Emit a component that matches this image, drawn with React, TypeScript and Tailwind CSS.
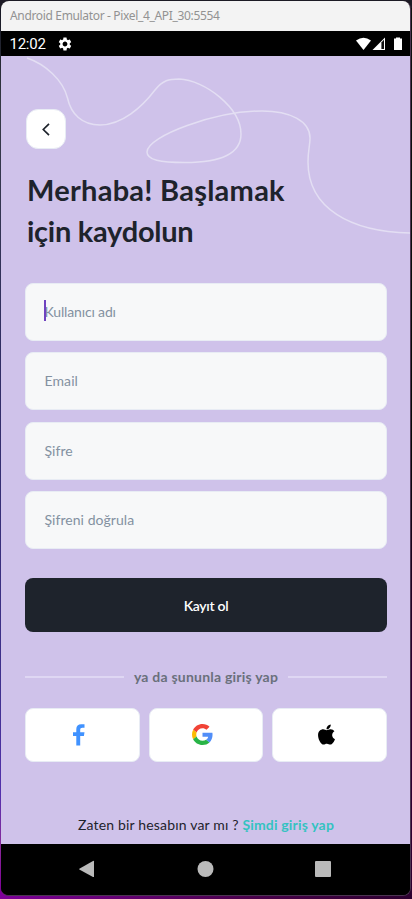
import { MdSettings } from "react-icons/md";
import { FaApple } from "react-icons/fa";

function Field({ label, tracking, focused = false }: { label: string; tracking: string; focused?: boolean }) {
  return (
    <div className="relative flex h-[58px] items-center rounded-lg border border-[#e8ecf4] bg-[#f7f8f9] pl-[18.5px]">
      {focused && <span className="absolute left-[18px] top-[16px] h-[21px] w-[2px] bg-[#6f43c0]" />}
      <span className={`whitespace-nowrap text-[14px] leading-5 text-[#8391a1] ${tracking}`}>{label}</span>
    </div>
  );
}

function FacebookIcon() {
  return (
    <svg width="12" height="22" viewBox="0 0 12 22" fill="#4092ff">
      <path d="M3.3 21.5V12H0V8.2h3.3V5.1C3.3 2 5.2.3 8.2.3h3.3v3.5H9.4C7.8 3.8 7.2 4.6 7.2 6v2.2h4.3L10.9 12H7.2v9.5z" />
    </svg>
  );
}

function GoogleIcon() {
  return (
    <svg width="21" height="21" viewBox="0 0 48 48">
      <path fill="#F14336" d="M24 9.5c3.54 0 6.71 1.22 9.21 3.6l6.85-6.85C35.9 2.38 30.47 0 24 0 14.62 0 6.51 5.38 2.56 13.22l7.98 6.19C12.43 13.72 17.74 9.5 24 9.5z" />
      <path fill="#518EF8" d="M46.98 24.55c0-1.57-.15-3.09-.38-4.55H24v9.02h12.94c-.58 2.96-2.26 5.48-4.78 7.18l7.73 6c4.51-4.18 7.09-10.36 7.09-17.65z" />
      <path fill="#FBBB00" d="M10.53 28.59c-.48-1.45-.76-2.99-.76-4.59s.27-3.14.76-4.59l-7.98-6.19C.92 16.46 0 20.12 0 24s.92 7.54 2.56 10.78z" />
      <path fill="#28B446" d="M24 48c6.48 0 11.93-2.13 15.89-5.81l-7.73-6c-2.15 1.45-4.92 2.3-8.16 2.3-6.26 0-11.57-4.22-13.47-9.91l-7.98 6.19C6.51 42.62 14.62 48 24 48z" />
    </svg>
  );
}

const socialCard = "flex h-[54px] items-center justify-center rounded-lg border border-[#e8ecf4] bg-white pr-[6px]";

export default function App() {
  return (
    <div className="h-[899px] w-[412px] pl-px pt-px font-['Lato',sans-serif] [background:linear-gradient(#1c1a24,#1c1a24)_0_0/412px_8px_no-repeat,linear-gradient(180deg,#141421_0%,#353a44_12%,#302d64_40%,#403090_78%,#5330ad_89%,#8a299a_95%,#7d0098_100%)_0_0/9px_892px_no-repeat,linear-gradient(180deg,#111111_0%,#080808_50%,#2d0030_75%,#2d0030_100%)_100%_0/9px_892px_no-repeat,linear-gradient(90deg,#7d0098,#4b004c_60%,#2d0030)]">
      <div className="flex h-[895px] w-[410px] flex-col overflow-hidden rounded-lg border-b border-r border-[#4b3550] bg-black">
        <header className="flex h-[30px] shrink-0 items-center bg-[#f3f3f3] pl-[9px] font-['Noto_Sans',sans-serif] text-[12px] text-[#929292]">
          <span className="whitespace-nowrap tracking-[-0.34px]">Android Emulator - Pixel_4_API_30:5554</span>
        </header>
        <div className="flex h-[25px] shrink-0 items-center bg-black pl-[8.5px] pr-[8px] font-['Roboto',sans-serif] text-white">
          <span className="relative top-px text-[15px] tracking-[-0.25px]">12:02</span>
          <MdSettings className="ml-[11px] size-4" />
          <svg className="ml-auto" width="46" height="14" viewBox="0 0 46 14">
            <path d="M0 3.5Q7.5-2.2 15 3.5L7.5 13Z" fill="white" />
            <path d="M16.5 13 29 .5V13Z" fill="white" />
            <path d="M25.4 5.4 28 2.8V12H25.4Z" fill="#111" />
            <path d="M38 1.5h2V.5h4v1h2V13h-8Z" fill="white" />
          </svg>
        </div>

        <main className="relative flex h-[788px] shrink-0 flex-col bg-[#cfc2ea] pl-6 pr-[23px] pt-[53px]">
          <svg className="absolute left-0 top-0" width="409" height="180" viewBox="1 56 409 180" fill="none">
            <path
              d="M27 58C45 64 63 80 67.5 98C71 114 82 125 100 125C122 125 142 107 155 90C163 80 169 79 179 79C205 80 241 108 241 134C241 155 218 162.5 185 162.5C160 162.5 147 160 147 152C147 136 216 111 262 111C290 111 310 121 310 138C310 146 308 150 308 162C308 208 350 232 411 233"
              stroke="#e3def3"
              strokeWidth="1.5"
            />
          </svg>
          <button className="relative ml-px flex size-10 shrink-0 items-center justify-center rounded-xl border border-[#e8ecf4] bg-white">
            <svg width="8" height="13" viewBox="0 0 8 13" fill="none" stroke="#1e232c" strokeWidth="1.7">
              <path d="M7 .8 1.3 6.5 7 12.2" />
            </svg>
          </button>
          <h1 className="relative mt-[20px] h-[82px] whitespace-nowrap pl-[2px] text-[29px] font-bold leading-[41px] text-[#1e232c]">
            <span className="block tracking-[0.26px]">Merhaba! Başlamak</span>
            <span className="block tracking-[-0.26px]">için kaydolun</span>
          </h1>
          <div className="mt-[32px] flex flex-col gap-[11.4px]">
            <Field label="Kullanıcı adı" tracking="tracking-[-0.15px]" focused />
            <Field label="Email" tracking="tracking-[0.1px]" />
            <Field label="Şifre" tracking="tracking-[0.05px]" />
            <Field label="Şifreni doğrula" tracking="tracking-[0.05px]" />
          </div>
          <button className="mt-[28.8px] flex h-[54px] shrink-0 items-center justify-center rounded-lg bg-[#1e232c] pt-[2px] text-[14px] font-semibold tracking-[-0.3px] text-white">
            Kayıt ol
          </button>
          <div className="mt-[35px] flex h-5 items-center">
            <span className="h-[1.5px] w-[99px] bg-[#dfd7f3]" />
            <span className="flex-1 whitespace-nowrap text-center text-[14px] font-bold tracking-[0.22px] text-[#6a707c]">ya da şununla giriş yap</span>
            <span className="h-[1.5px] w-[99px] bg-[#dfd7f3]" />
          </div>
          <div className="mt-[21px] grid grid-cols-3 gap-[9px]">
            <button className={socialCard}><FacebookIcon /></button>
            <button className={socialCard}><GoogleIcon /></button>
            <button className={socialCard}><FaApple className="size-[23px] text-black" /></button>
          </div>
          <p className="mt-[53.5px] whitespace-nowrap text-center text-[14px] leading-5 tracking-[0.17px] text-[#1e232c]">
            Zaten bir hesabın var mı ? <a className="font-bold text-[#35c2c1]">Şimdi giriş yap</a>
          </p>
        </main>

        <nav className="flex flex-1 items-center bg-black pb-px pl-[78px]">
          <svg width="255" height="18" viewBox="0 0 255 18" fill="#bababa">
            <path d="M.3 8.8Q0 9.1.3 9.4L14 17Q15 17.4 15 16.4V1.5Q15 .5 14 1Z" />
            <circle cx="126.5" cy="9" r="8" />
            <rect x="236" y="1" width="16" height="16" rx="1" />
          </svg>
        </nav>
      </div>
    </div>
  );
}
